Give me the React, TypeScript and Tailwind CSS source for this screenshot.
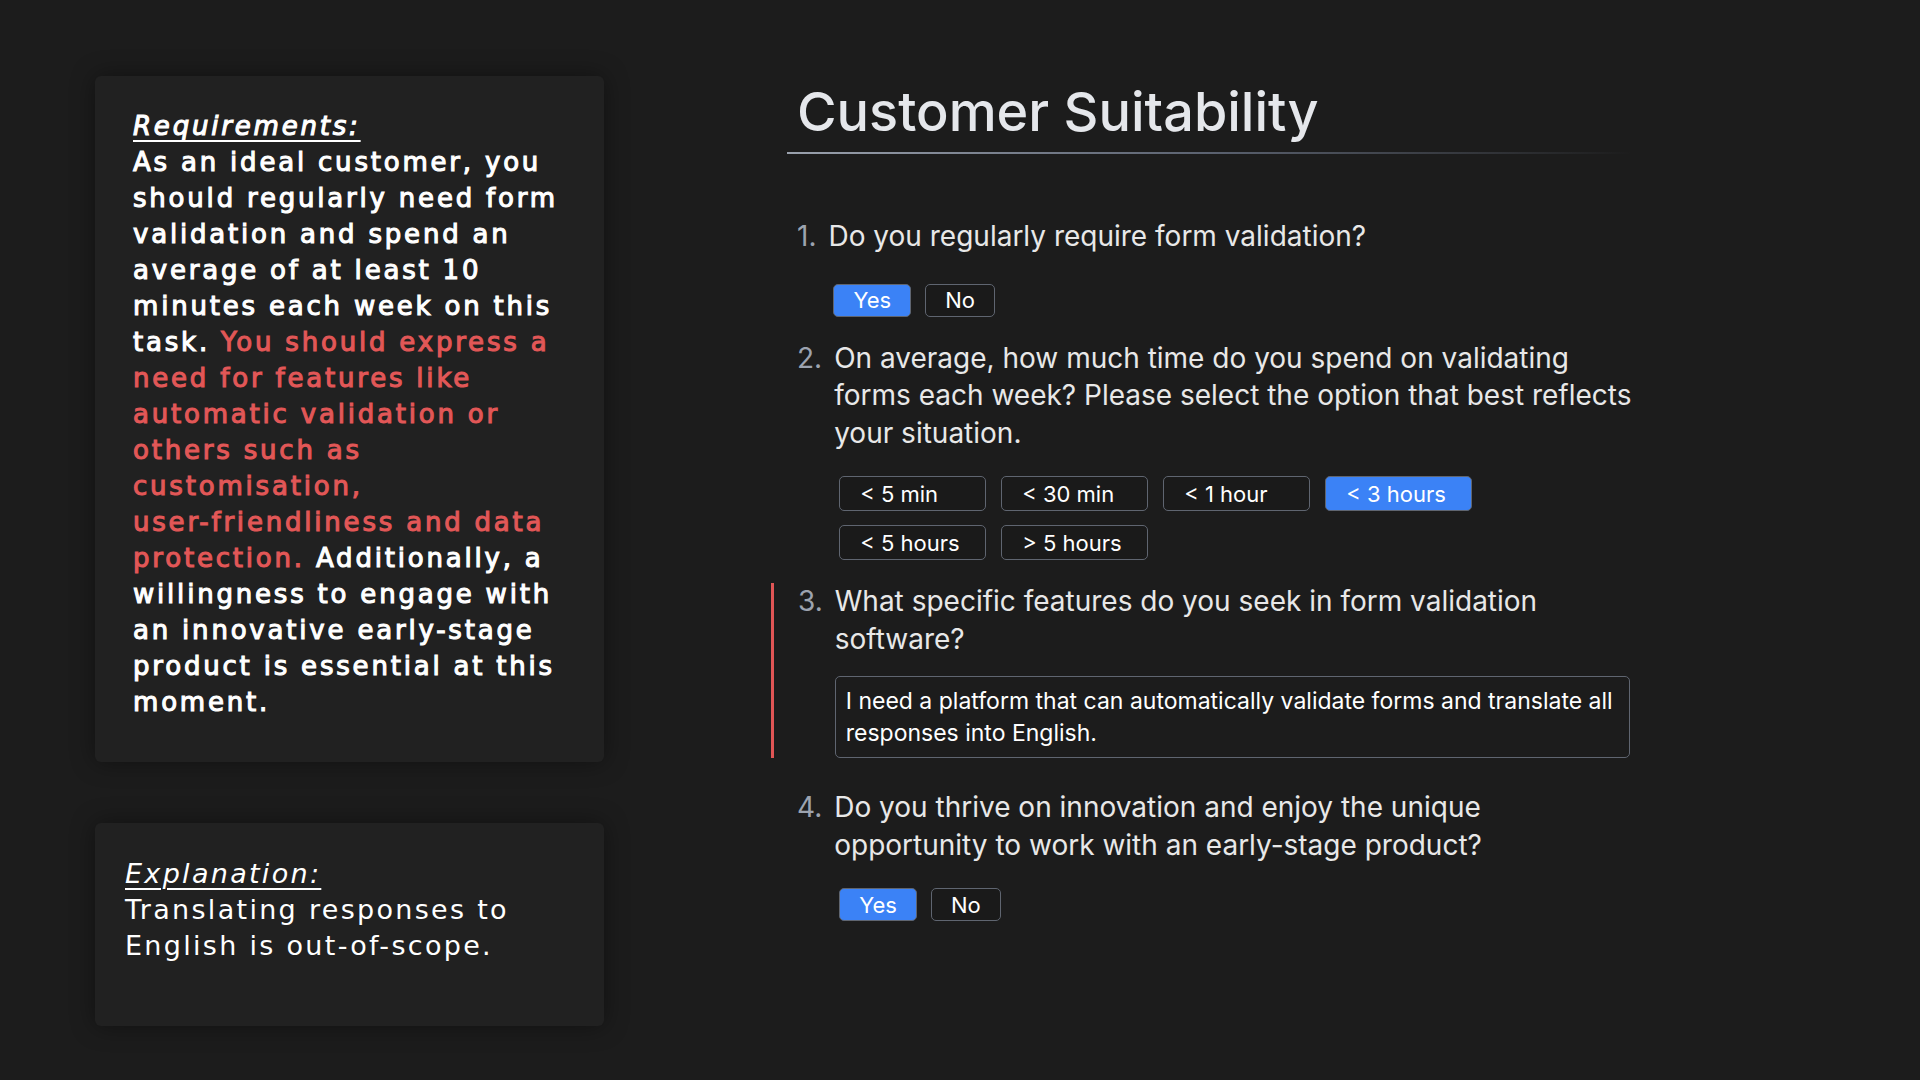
import React from "react";

const timeOptions = [
  { label: "< 5 min", selected: false },
  { label: "< 30 min", selected: false },
  { label: "< 1 hour", selected: false },
  { label: "< 3 hours", selected: true },
  { label: "< 5 hours", selected: false },
  { label: "> 5 hours", selected: false },
];

const YesNo = () => (
  <div className="flex gap-[14px] ml-[5px]">
    <button className="h-[33px] px-[19px] rounded-[5px] border border-[#5f6570] bg-[#3b82f6] text-white text-[22px] leading-none">
      Yes
    </button>
    <button className="h-[33px] px-[19px] rounded-[5px] border border-[#5f6570] bg-[#1a1a1a] text-white text-[22px] leading-none">
      No
    </button>
  </div>
);

const Question = ({
  num,
  text,
  children,
}: {
  num: string;
  text: string;
  children?: React.ReactNode;
}) => (
  <div className="flex gap-[12px]">
    <span className="text-[#9ca3af] text-[28px] leading-[37.5px]">{num}</span>
    <div className="flex-1">
      <p className="text-[#e8e8e8] text-[28px] leading-[37.5px]">{text}</p>
      {children}
    </div>
  </div>
);

const App = () => {
  return (
    <div className="min-h-screen w-full bg-[#1c1c1c] flex">
      {/* left column: notes */}
      <div className="pl-[95px] pt-[76px] flex flex-col gap-[61px] font-['DejaVu_Sans',sans-serif] text-white">
        <div className="w-[509px] h-[686px] pl-[38px] pr-[26px] pt-[32px] bg-[#212121] rounded-md shadow-[0_0_24px_rgba(0,0,0,0.4)]">
          <div className="text-[26px] leading-[36px] tracking-[2.8px] [-webkit-text-stroke:1.1px_currentColor]">
            <p className="italic underline decoration-2 underline-offset-[5px] inline-block">
              Requirements:
            </p>
            <p>
              As an ideal customer, you should regularly need form validation and
              spend an average of at least 10 minutes each week on this task.{" "}
              <span className="text-[#e25757]">
                You should express a need for features like automatic validation
                or others such as customisation,{" "}
                <span className="whitespace-nowrap">user-friendliness</span> and
                data protection.
              </span>{" "}
              Additionally, a willingness to engage with an innovative{" "}
              <span className="whitespace-nowrap">early-stage</span> product is
              essential at this moment.
            </p>
          </div>
        </div>
        <div className="w-[509px] h-[203px] pl-[30px] pr-[26px] pt-[33px] bg-[#212121] rounded-md shadow-[0_0_24px_rgba(0,0,0,0.4)]">
          <div className="text-[27px] leading-[36px] tracking-[2.3px]">
            <p className="italic underline decoration-2 underline-offset-[5px] inline-block">
              Explanation:
            </p>
            <p>Translating responses to English is out-of-scope.</p>
          </div>
        </div>
      </div>

      {/* right column: form */}
      <div className="ml-[183px] w-[845px] pt-[80px] font-['Inter',sans-serif]">
        <h1 className="px-[10px] pb-[8px] text-[54px] leading-[64px] font-medium text-[#e5e7eb]">
          Customer Suitability
        </h1>
        <div className="h-[2px] bg-linear-to-r from-[#9aa1ad] via-[#5b6270] to-transparent" />

        <div className="mt-[64px] flex flex-col">
          <div className="pl-[10px]">
            <Question num="1." text="Do you regularly require form validation?">
              <div className="mt-[28px]">
                <YesNo />
              </div>
            </Question>
          </div>

          <div className="pl-[10px] mt-[23px]">
            <Question
              num="2."
              text="On average, how much time do you spend on validating forms each week? Please select the option that best reflects your situation."
            >
              <div className="mt-[24px] ml-[5px] grid grid-cols-[repeat(4,147px)] gap-x-[15px] gap-y-[14px]">
                {timeOptions.map((opt) => (
                  <button
                    key={opt.label}
                    className={
                      opt.selected
                        ? "h-[35px] pl-[20px] text-left rounded-[5px] border border-[#5f6570] bg-[#3b82f6] text-white text-[22px] leading-none"
                        : "h-[35px] pl-[20px] text-left rounded-[5px] border border-[#5f6570] bg-[#1a1a1a] text-white text-[22px] leading-none"
                    }
                  >
                    {opt.label}
                  </button>
                ))}
              </div>
            </Question>
          </div>

          <div className="-ml-[16px] pl-[24px] mt-[23px] border-l-[3px] border-[#e05555]">
            <Question
              num="3."
              text="What specific features do you seek in form validation software?"
            >
              <div className="mt-[18px] w-[795px] rounded-[5px] border border-[#5f6570] px-[10px] py-[8px] text-[23px] leading-[32px] text-white">
                I need a platform that can automatically validate forms and translate
                all responses into English.
              </div>
            </Question>
          </div>

          <div className="pl-[10px] mt-[31px]">
            <Question
              num="4."
              text="Do you thrive on innovation and enjoy the unique opportunity to work with an early-stage product?"
            >
              <div className="mt-[24px]">
                <YesNo />
              </div>
            </Question>
          </div>
        </div>
      </div>
    </div>
  );
};

export default App;
